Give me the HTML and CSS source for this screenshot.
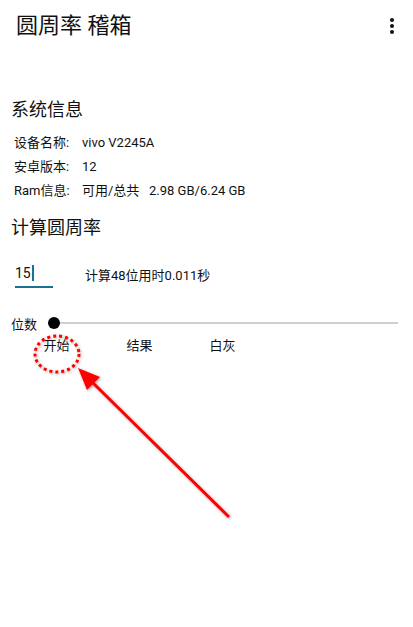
FILE: index.html
```html
<!DOCTYPE html>
<html lang="zh-CN">
<head>
    <meta charset="UTF-8">
    <meta name="viewport" content="width=device-width, initial-scale=1.0">
    <title>圆周率 稽箱</title>
    <link rel="stylesheet" href="styles.css">
</head>
<body>
    <div class="appbar">
        <div class="app-title">圆周率 稽箱</div>
        <div class="menu">
            <span class="dot"></span>
            <span class="dot"></span>
            <span class="dot"></span>
        </div>
    </div>

    <h2 class="section first">系统信息</h2>
    <div class="info">
        <div class="info-row"><span class="info-key">设备名称:</span><span>vivo V2245A</span></div>
        <div class="info-row"><span class="info-key">安卓版本:</span><span>12</span></div>
        <div class="info-row"><span class="info-key">Ram信息:</span><span>可用/总共&nbsp;&nbsp;&nbsp;2.98 GB/6.24 GB</span></div>
    </div>

    <h2 class="section">计算圆周率</h2>
    <div class="calc-row">
        <div class="digits">15<span class="cursor"></span></div>
        <div class="calc-result">计算48位用时0.011秒</div>
    </div>

    <div class="slider-row">
        <span class="slider-label">位数</span>
        <span class="thumb"></span>
        <span class="track"></span>
    </div>

    <div class="buttons">
        <div class="btn">开始</div>
        <div class="btn">结果</div>
        <div class="btn">白灰</div>
    </div>

    <!-- 标注 -->
    <svg class="mark" width="413" height="627" viewBox="0 0 413 627">
        <defs>
            <filter id="shadow" x="-20%" y="-20%" width="140%" height="140%">
                <feDropShadow dx="1" dy="1" stdDeviation="1.5" flood-color="#000" flood-opacity="0.35"/>
            </filter>
        </defs>
        <g filter="url(#shadow)">
            <ellipse cx="57" cy="354" rx="22" ry="18" fill="none" stroke="#ff0000" stroke-width="3" stroke-dasharray="3 3"/>
            <line x1="229" y1="517" x2="90" y2="380" stroke="#ff0000" stroke-width="3"/>
            <polygon points="78,368 100,377 87,390" fill="#ff0000"/>
        </g>
    </svg>
</body>
</html>
```

FILE: styles.css
```css
body {
    margin: 0;
    font-family: Roboto, "Noto Sans CJK SC", sans-serif;
    color: #111;
    background: #fff;
    width: 413px;
    height: 627px;
    position: relative;
    overflow: hidden;
}
.appbar {
    height: 52px;
    display: flex;
    align-items: center;
    justify-content: space-between;
    padding: 0 19px 0 16px;
}
.app-title {
    font-size: 22px;
    line-height: 52px;
}
.menu {
    display: flex;
    flex-direction: column;
    gap: 2px;
}
.dot {
    width: 4px;
    height: 4px;
    border-radius: 50%;
    background: #111;
}
.section {
    font-size: 18px;
    font-weight: normal;
    line-height: 24px;
    margin: 13px 0 0 11px;
}
.section.first {
    margin-top: 46px;
}
.info {
    margin: 9px 0 0 14px;
    font-size: 13px;
}
.info-row {
    line-height: 24px;
    display: flex;
}
.info-key {
    width: 68px;
}
.calc-row {
    display: flex;
    align-items: flex-end;
    margin: 16px 0 0 15px;
}
.digits {
    width: 38px;
    height: 26px;
    padding-top: 4px;
    font-size: 14px;
    line-height: 26px;
    border-bottom: 2px solid #1f6f93;
    box-sizing: content-box;
    display: flex;
    align-items: center;
}
.cursor {
    width: 2px;
    height: 16px;
    margin-left: 1px;
    background: #1f6f93;
}
.calc-result {
    margin-left: 32px;
    font-size: 13px;
    line-height: 22px;
    padding-bottom: 1px;
}
.slider-row {
    display: flex;
    align-items: center;
    height: 22px;
    margin: 24px 15px 0 11px;
    font-size: 13px;
}
.slider-label {
    width: 37px;
}
.thumb {
    width: 12px;
    height: 12px;
    border-radius: 50%;
    background: #000;
}
.track {
    flex: 1;
    height: 2px;
    background: #cfcfcf;
}
.buttons {
    display: flex;
    margin-left: 15px;
    font-size: 13px;
    line-height: 24px;
}
.btn {
    width: 83px;
    text-align: center;
}
.mark {
    position: absolute;
    left: 0;
    top: 0;
    pointer-events: none;
}
```
